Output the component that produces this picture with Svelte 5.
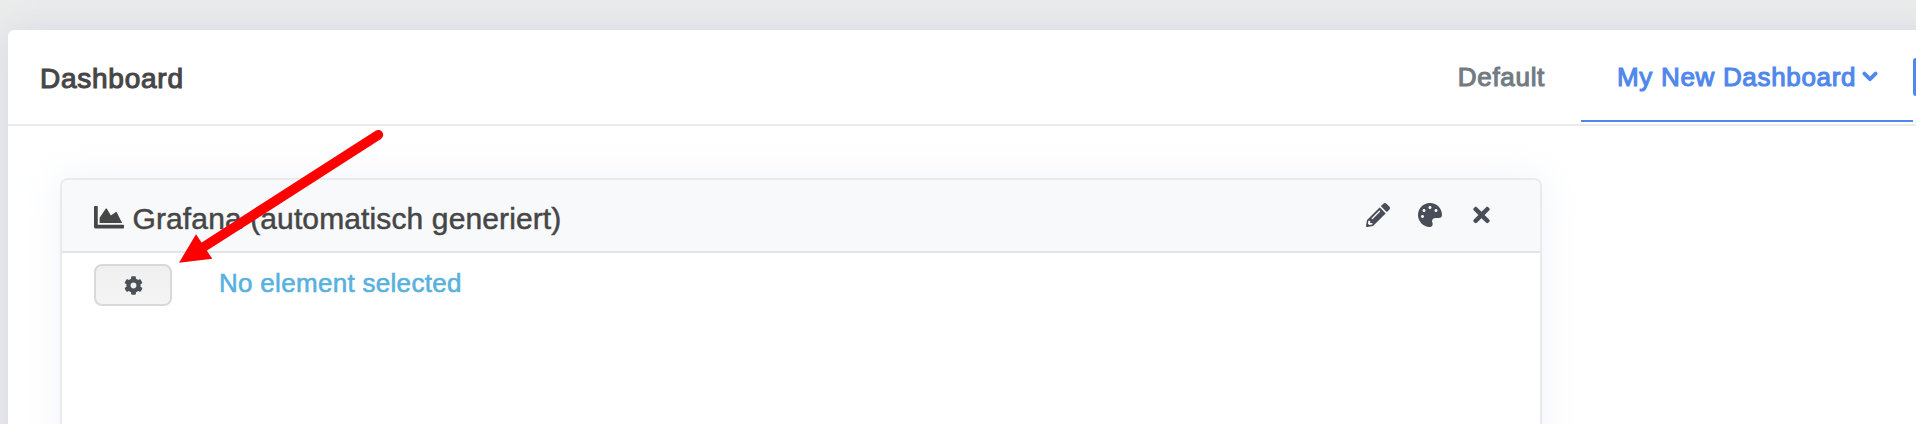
<script>
  const actions = [
    {
      name: 'edit', box: '0 0 512 512', width: 24, height: 24,
      path: 'M497.9 142.1l-46.1 46.1c-4.7 4.7-12.3 4.7-17 0l-111-111c-4.7-4.7-4.7-12.3 0-17l46.1-46.1c18.7-18.7 49.1-18.7 67.9 0l60.1 60.1c18.8 18.7 18.8 49.1 0 67.9zM284.2 99.8L21.6 362.4.4 483.9c-2.9 16.4 11.4 30.6 27.8 27.8l121.5-21.3 262.6-262.6c4.7-4.7 4.7-12.3 0-17l-111-111c-4.8-4.7-12.4-4.7-17.1 0zM124.1 339.9c-5.5-5.5-5.5-14.3 0-19.8l154-154c5.5-5.5 14.3-5.5 19.8 0s5.5 14.3 0 19.8l-154 154c-5.5 5.5-14.3 5.5-19.8 0zM88 424h48v36.3l-64.5 11.3-31.1-31.1L51.7 376H88v48z'
    },
    {
      name: 'palette', box: '0 0 512 512', width: 24, height: 24,
      path: 'M204.3 5C104.9 24.4 24.8 104.3 5.2 203.4c-37 187 131.7 326.4 258.8 306.7 41.2-6.4 61.4-54.6 42.5-91.7-23.1-45.4 9.9-98.4 60.9-98.4h79.7c35.8 0 64.8-29.6 64.9-65.3C511.5 97.1 368.1-26.9 204.3 5zM96 320c-17.7 0-32-14.3-32-32s14.3-32 32-32 32 14.3 32 32-14.3 32-32 32zm32-128c-17.7 0-32-14.3-32-32s14.3-32 32-32 32 14.3 32 32-14.3 32-32 32zm128-64c-17.7 0-32-14.3-32-32s14.3-32 32-32 32 14.3 32 32-14.3 32-32 32zm128 64c-17.7 0-32-14.3-32-32s14.3-32 32-32 32 14.3 32 32-14.3 32-32 32z'
    },
    {
      name: 'close', box: '-48 0 448 512', width: 21, height: 24,
      path: 'M242.72 256l100.07-100.07c12.28-12.28 12.28-32.19 0-44.48l-22.24-22.24c-12.28-12.28-32.19-12.28-44.48 0L176 189.28 75.93 89.21c-12.28-12.28-32.19-12.28-44.48 0L9.21 111.45c-12.28 12.28-12.28 32.19 0 44.48L109.28 256 9.21 356.07c-12.28 12.28-12.28 32.19 0 44.48l22.24 22.24c12.28 12.28 32.2 12.28 44.48 0L176 322.72l100.07 100.07c12.28 12.28 32.2 12.28 44.48 0l22.24-22.24c12.28-12.28 12.28-32.19 0-44.48L242.72 256z'
    }
  ];
</script>

<div class="page">
  <main class="card">
    <header class="topbar">
      <h1>Dashboard</h1>
      <nav>
        <span class="tab">Default</span>
        <span class="tab active">
          My New Dashboard
          <svg class="chevron" viewBox="0 0 16 12" width="16" height="12"><path d="M2.4 2.6 8 8.2 13.6 2.6" /></svg>
        </span>
        <span class="add"></span>
      </nav>
    </header>
    <section class="content">
      <article class="widget">
        <header class="widget-head">
          <svg class="chart" viewBox="0 0 512 384" width="30" height="22.5">
            <path d="M500 320H64V12C64 5 59 0 52 0H12C5 0 0 5 0 12v348c0 13 11 24 24 24h476c7 0 12-5 12-12v-40c0-7-5-12-12-12zM373 103l-85 57-68-113c-5-8-16-8-21 0L96 200v88h384l-90-179c-3-7-11-9-17-6z" />
          </svg>
          <h2>Grafana (automatisch generiert)</h2>
          <div class="actions">
            {#each actions as icon (icon.name)}
              <svg viewBox={icon.box} width={icon.width} height={icon.height}><path d={icon.path} /></svg>
            {/each}
          </div>
        </header>
        <div class="widget-body">
          <button aria-label="Settings">
            <svg viewBox="0 0 512 512" width="19" height="19"><path d="M487.4 315.7l-42.6-24.6c4.3-23.2 4.3-47 0-70.2l42.6-24.6c4.9-2.8 7.1-8.6 5.5-14-11.1-35.6-30-67.8-54.7-94.6-3.8-4.1-10-5.1-14.8-2.3L380.8 110c-17.9-15.4-38.5-27.3-60.8-35.1V25.8c0-5.6-3.9-10.5-9.4-11.7-36.7-8.2-74.3-7.8-109.2 0-5.5 1.2-9.4 6.1-9.4 11.7V75c-22.2 7.9-42.8 19.8-60.8 35.1L88.7 85.5c-4.9-2.8-11-1.9-14.8 2.3-24.7 26.7-43.6 58.9-54.7 94.6-1.7 5.4.6 11.2 5.5 14L67.3 221c-4.3 23.2-4.3 47 0 70.2l-42.6 24.6c-4.9 2.8-7.1 8.6-5.5 14 11.1 35.6 30 67.8 54.7 94.6 3.8 4.1 10 5.1 14.8 2.3l42.6-24.6c17.9 15.4 38.5 27.3 60.8 35.1v49.2c0 5.6 3.9 10.5 9.4 11.7 36.7 8.2 74.3 7.8 109.2 0 5.5-1.2 9.4-6.1 9.4-11.7v-49.2c22.2-7.9 42.8-19.8 60.8-35.1l42.6 24.6c4.9 2.8 11 1.9 14.8-2.3 24.7-26.7 43.6-58.9 54.7-94.6 1.5-5.5-.7-11.3-5.6-14.1zM256 336c-44.1 0-80-35.9-80-80s35.9-80 80-80 80 35.9 80 80-35.9 80-80 80z" /></svg>
          </button>
          <span class="empty">No element selected</span>
        </div>
      </article>
    </section>
  </main>
  <svg class="arrow" viewBox="0 0 1916 424" width="1916" height="424">
    <path d="M378.3 134.8 202 248" />
    <polygon points="179,262.7 196,234.3 212.3,258.8" />
  </svg>
</div>

<style>
  :global(body) { margin: 0; }
  .page {
    position: relative;
    box-sizing: border-box;
    width: 1916px;
    height: 424px;
    padding: 30px 0 0 8px;
    overflow: hidden;
    background: #ebeceb;
    font-family: "Liberation Sans", Arial, sans-serif;
    color: #464646;
  }
  .card {
    width: 2000px;
    height: 500px;
    background: #fff;
    border-radius: 6px;
    box-shadow: 0 0 36px rgba(205, 210, 228, 0.7);
  }
  .topbar {
    box-sizing: border-box;
    display: flex;
    justify-content: space-between;
    width: 1908px;
    height: 96px;
    padding-left: 32px;
    border-bottom: 2px solid #ebebeb;
  }
  h1, h2 { margin: 0; white-space: nowrap; }
  h1 {
    font-size: 28px;
    font-weight: 400;
    line-height: 32px;
    letter-spacing: 0.75px;
    padding-top: 33px;
    -webkit-text-stroke: 1.1px currentColor;
  }
  nav { display: flex; height: 92px; }
  .tab {
    box-sizing: border-box;
    display: flex;
    align-items: flex-start;
    height: 92px;
    padding: 31px 36px 0;
    font-size: 26px;
    line-height: 32px;
    letter-spacing: 0.68px;
    white-space: nowrap;
    color: #727b82;
    -webkit-text-stroke: 1.1px currentColor;
  }
  .active {
    width: 332px;
    color: #5087ec;
    border-bottom: 2px solid #5087ec;
  }
  .chevron { margin: 10px 0 0 6px; flex: none; }
  .chevron path { fill: none; stroke: currentColor; stroke-width: 3.8; stroke-linecap: round; stroke-linejoin: round; }
  .add { width: 3px; height: 38px; margin-top: 28px; background: #5087ec; border-radius: 3px 0 0 3px; }
  .content { padding: 52px 0 0 52px; }
  .widget {
    box-sizing: border-box;
    width: 1482px;
    height: 400px;
    border: 2px solid #e9eaec;
    border-radius: 8px;
    background: #fff;
    box-shadow: 0 0 36px rgba(205, 216, 238, 0.3);
  }
  .widget-head {
    box-sizing: border-box;
    display: flex;
    height: 73px;
    padding: 0 48px 0 32px;
    border-bottom: 2px solid #e2e4e6;
    border-radius: 6px 6px 0 0;
    background: #f8f9fb;
  }
  svg { fill: currentColor; }
  .chart { flex: none; margin-top: 26px; }
  h2 {
    margin-left: 8.5px;
    padding-top: 21px;
    font-size: 30px;
    line-height: 36px;
    font-weight: 400;
    letter-spacing: 0.12px;
    -webkit-text-stroke: 0.5px currentColor;
  }
  .actions { display: flex; gap: 28px; margin: 23px 0 0 auto; color: #484d58; }
  .actions svg:last-child { margin-left: 1.5px; }
  .widget-body { display: flex; padding: 11px 0 0 32px; }
  button {
    box-sizing: border-box;
    display: flex;
    align-items: center;
    justify-content: center;
    width: 78px;
    height: 42px;
    padding: 0;
    color: #495057;
    border: 2px solid #d9d9d9;
    border-radius: 8px;
    background: linear-gradient(#f0f0f0, #f4f4f4);
  }
  .empty {
    margin-left: 47px;
    padding-top: 2px;
    font-size: 26px;
    line-height: 34px;
    letter-spacing: 0.3px;
    color: #58b1de;
    -webkit-text-stroke: 0.6px currentColor;
  }
  .arrow { position: absolute; left: 0; top: 0; }
  .arrow path { fill: none; stroke: #f00; stroke-width: 9.8; stroke-linecap: round; }
  .arrow polygon { fill: #f00; }
</style>
